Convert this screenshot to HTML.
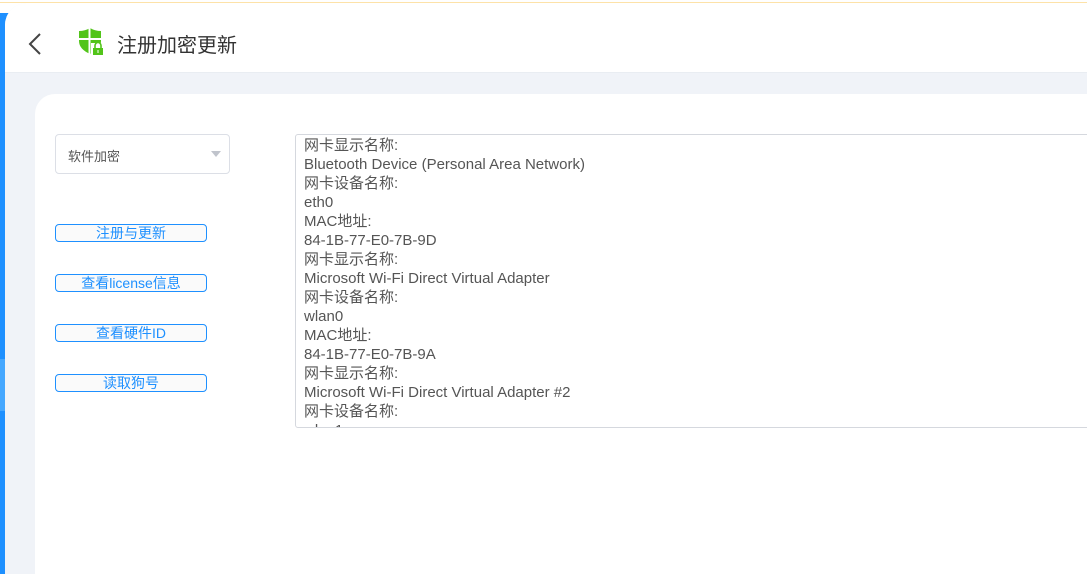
<!DOCTYPE html>
<html><head><meta charset="utf-8"><style>
*{margin:0;padding:0;box-sizing:border-box}
body{width:1087px;height:574px;overflow:hidden;background:#fff;font-family:"Liberation Sans","Noto Sans CJK SC",sans-serif;position:relative}
.top{position:absolute;left:0;top:0;width:1087px;height:3px;background:#fff;border-bottom:1px solid #fde2a8}
.strip{position:absolute;left:0;top:13px;width:30px;height:561px;background:#1e90ff}
.strip2{position:absolute;left:0;top:359px;width:5px;height:52px;background:#45a7ff}
.gray{position:absolute;left:5px;top:3px;right:0;bottom:0;background:#f0f3f8;border-top-left-radius:22px}
.header{position:absolute;left:5px;top:3px;right:0;height:70px;background:#fff;border-top-left-radius:22px;border-bottom:1px solid #e9edf2}
.title{position:absolute;left:117px;top:29px;font-size:20px;color:#333}
.card{position:absolute;left:35px;top:94px;right:0;bottom:0;background:#fff;border-top-left-radius:20px}
.sel{position:absolute;left:55px;top:134px;width:175px;height:40px;border:1px solid #dcdfe6;border-radius:4px;font-size:13px;color:#555;padding:11px 0 0 12px}
.sel:after{content:"";position:absolute;right:8px;top:16px;border:5px solid transparent;border-top:6px solid #c0c4cc}
.btn{position:absolute;left:55px;width:152px;height:18px;border:1px solid #1e90ff;border-radius:4px;background:#fafafa;color:#1e90ff;font-size:14px;text-align:center;line-height:16px}
.ta{position:absolute;left:295px;top:134px;width:800px;height:294px;border:1px solid #d5d8de;border-radius:3px;overflow:hidden;padding:1px 0 0 8px;font-size:15px;line-height:19px;color:#555}
</style></head><body>
<div class="top"></div>
<div class="strip"></div><div class="strip2"></div>
<div class="gray"></div>
<div class="header">
<svg style="position:absolute;left:22px;top:29px" width="16" height="24" viewBox="0 0 16 24"><path d="M13 2L3 12l10 10" fill="none" stroke="#444" stroke-width="2"/></svg>
<svg style="position:absolute;left:74px;top:25px" width="26" height="27" viewBox="0 0 26 27">
<path d="M0 3Q6 3 11 0Q16 3 22 3V13Q22 21 11 26Q0 21 0 13Z" fill="#52c41a"/>
<rect x="9.5" y="0" width="2" height="26" fill="#fff"/><rect x="0" y="10" width="22" height="2" fill="#fff"/>
<rect x="12" y="15" width="14" height="12" fill="#fff"/>
<path d="M16 20v-2.5a3 3 0 0 1 6 0V20" fill="none" stroke="#52c41a" stroke-width="1.6"/>
<rect x="14" y="20" width="10" height="7" fill="#52c41a"/><rect x="18.5" y="22" width="1" height="3" fill="#fff"/>
</svg>
</div>
<div class="title">注册加密更新</div>
<div class="card"></div>
<div class="sel">软件加密</div>
<div class="btn" style="top:224px">注册与更新</div>
<div class="btn" style="top:274px">查看license信息</div>
<div class="btn" style="top:324px">查看硬件ID</div>
<div class="btn" style="top:374px">读取狗号</div>
<div class="ta">网卡显示名称:<br>Bluetooth Device (Personal Area Network)<br>网卡设备名称:<br>eth0<br>MAC地址:<br>84-1B-77-E0-7B-9D<br>网卡显示名称:<br>Microsoft Wi-Fi Direct Virtual Adapter<br>网卡设备名称:<br>wlan0<br>MAC地址:<br>84-1B-77-E0-7B-9A<br>网卡显示名称:<br>Microsoft Wi-Fi Direct Virtual Adapter #2<br>网卡设备名称:<br>wlan1</div>
</body></html>
